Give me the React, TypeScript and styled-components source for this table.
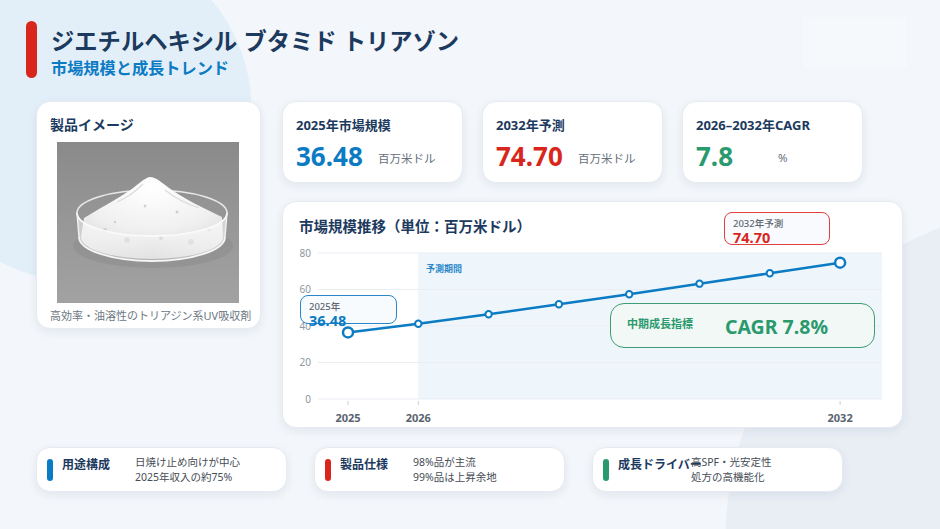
import React from "react";
import styled, { createGlobalStyle } from "styled-components";

const GlobalStyle = createGlobalStyle`
  * { box-sizing: border-box; }
  body {
    margin: 0;
    font-family: "Noto Sans", "Noto Sans CJK JP", sans-serif;
  }
`;

const NAVY = "#1c3a5e";
const BLUE = "#0b7bc4";
const RED = "#d9261c";
const GREEN = "#2a9a6e";

const Root = styled.div`
  width: 940px;
  height: 529px;
  overflow: hidden;
  padding-top: 21px;
  background:
    radial-gradient(circle at 80px 110px, #e3eff8 171px, rgba(227, 239, 248, 0) 172px),
    radial-gradient(circle at 1060px 540px, #e9eef5 334px, rgba(233, 238, 245, 0) 335px),
    #f3f6fa;
`;

const Header = styled.header`
  display: flex;
  align-items: flex-start;
  gap: 14px;
  margin-left: 26px;
  height: 57px;
`;

const AccentBar = styled.div`
  width: 11px;
  height: 57px;
  border-radius: 6px;
  background: ${RED};
`;

const TitleBlock = styled.div`
  padding-top: 5px;
`;

const Title = styled.h1`
  margin: 0;
  font-size: 23.3px;
  line-height: 31px;
  font-weight: 700;
  color: ${NAVY};
`;

const Subtitle = styled.div`
  font-size: 16.2px;
  line-height: 22px;
  font-weight: 700;
  color: ${BLUE};
`;

const LogoMark = styled.div`
  margin-left: auto;
  margin-right: 33px;
  margin-top: -4px;
  width: 104px;
  height: 50px;
  background: rgba(255, 255, 255, 0.3);
`;

const Content = styled.main`
  display: flex;
  align-items: flex-start;
  gap: 21px;
  margin: 23px 0 0 36px;
`;

const Card = styled.div`
  background: #fff;
  border: 1px solid #e6ebf2;
  border-radius: 14px;
  box-shadow: 0 3px 10px rgba(30, 60, 100, 0.08);
`;

const ProductCard = styled(Card)`
  width: 225px;
  height: 228px;
  padding: 12px 0 0 13px;
  display: flex;
  flex-direction: column;
`;

const CardTitle = styled.div`
  font-size: 14px;
  line-height: 22px;
  font-weight: 700;
  color: ${NAVY};
`;

const ImageFrame = styled.div`
  width: 182px;
  height: 161px;
  margin: 6px 0 0 7px;
`;

const Caption = styled.div`
  margin-top: 5px;
  font-size: 11px;
  line-height: 16px;
  color: #6c7783;
  white-space: nowrap;
`;

const RightColumn = styled.div`
  width: 621px;
  display: flex;
  flex-direction: column;
  gap: 18px;
`;

const KpiRow = styled.div`
  display: flex;
  gap: 19px;
`;

const KpiCard = styled(Card)`
  width: 181px;
  height: 82px;
  padding: 13px 0 0 13px;
`;

const KpiLabel = styled.div`
  font-size: 13px;
  line-height: 20px;
  font-weight: 700;
  color: ${NAVY};
`;

const KpiValueRow = styled.div`
  display: flex;
  align-items: center;
  gap: 12px;
  margin-top: 5px;
`;

const KpiValue = styled.div<{ $color: string }>`
  width: 70px;
  font-size: 26px;
  line-height: 32px;
  font-weight: 700;
  color: ${(p) => p.$color};
`;

const KpiUnit = styled.div`
  font-size: 11.5px;
  color: #66707c;
  padding-top: 3px;
`;

const ChartCard = styled(Card)`
  position: relative;
  width: 621px;
  height: 227px;
  padding-top: 12px;
`;

const ChartTitle = styled.div`
  margin-left: 16px;
  font-size: 14.5px;
  line-height: 24px;
  font-weight: 700;
  color: ${NAVY};
`;

const Callout = styled.div<{ $border: string; $bg: string }>`
  position: absolute;
  border: 1.5px solid ${(p) => p.$border};
  background: ${(p) => p.$bg};
  border-radius: 8px;
`;

const PointCallout = styled(Callout)<{ $left: number; $top: number; $w: number; $h: number }>`
  left: ${(p) => p.$left}px;
  top: ${(p) => p.$top}px;
  width: ${(p) => p.$w}px;
  height: ${(p) => p.$h}px;
  padding: 4px 0 0 8px;
`;

const CalloutLabel = styled.div`
  font-size: 9.5px;
  line-height: 13px;
  color: #5d6670;
  font-weight: 500;
`;

const CalloutValue = styled.div<{ $color: string }>`
  font-size: 14.5px;
  line-height: 15px;
  font-weight: 700;
  color: ${(p) => p.$color};
`;

const CagrBox = styled(Callout)`
  left: 327px;
  top: 101px;
  width: 265px;
  height: 45px;
  border-radius: 14px;
  display: flex;
  align-items: center;
  gap: 32px;
  padding-left: 16px;
`;

const CagrLabel = styled.div`
  font-size: 11px;
  font-weight: 700;
  color: ${GREEN};
  margin-top: -5px;
`;

const CagrValue = styled.div`
  font-size: 19.5px;
  font-weight: 700;
  color: ${GREEN};
  margin-top: 2px;
`;

const BottomRow = styled.div`
  display: flex;
  gap: 27px;
  margin: 19px 0 0 36px;
`;

const InfoCard = styled(Card)`
  width: 251px;
  height: 45px;
  display: flex;
  align-items: center;
  padding: 0 10px;
`;

const InfoBar = styled.div<{ $color: string }>`
  width: 6px;
  height: 22px;
  border-radius: 3px;
  background: ${(p) => p.$color};
  flex-shrink: 0;
`;

const InfoLabel = styled.div`
  width: 73px;
  margin-left: 9px;
  align-self: flex-start;
  margin-top: 8px;
  font-size: 12px;
  line-height: 17px;
  font-weight: 700;
  color: ${NAVY};
  white-space: nowrap;
`;

const InfoText = styled.div`
  position: relative;
  font-size: 10.5px;
  line-height: 14.5px;
  color: #454c55;
  white-space: nowrap;
`;

const ProductImage = () => (
  <svg width="182" height="161" viewBox="0 0 182 161">
    <defs>
      <linearGradient id="bgGrad" x1="0" y1="0" x2="0" y2="1">
        <stop offset="0" stopColor="#8a8a8a" />
        <stop offset="0.5" stopColor="#979797" />
        <stop offset="1" stopColor="#a2a2a2" />
      </linearGradient>
      <radialGradient id="powderGrad" cx="0.5" cy="0.15" r="0.9">
        <stop offset="0" stopColor="#ffffff" />
        <stop offset="0.55" stopColor="#f0f0f0" />
        <stop offset="1" stopColor="#d4d4d4" />
      </radialGradient>
      <linearGradient id="glassGrad" x1="0" y1="0" x2="1" y2="0">
        <stop offset="0" stopColor="#ffffff" stopOpacity="0.55" />
        <stop offset="0.5" stopColor="#ffffff" stopOpacity="0.25" />
        <stop offset="1" stopColor="#ffffff" stopOpacity="0.6" />
      </linearGradient>
    </defs>
    <rect width="182" height="161" fill="url(#bgGrad)" />
    <ellipse cx="96" cy="104" rx="80" ry="22" fill="#777" opacity="0.22" />
    <path d="M20 71 A75 23 0 0 1 170 71" fill="none" stroke="#e8e8e8" strokeWidth="1.6" />
    <path
      d="M27 76 C40 68 58 58 72 49 C82 42 87 36 93 35 C99 35 104 40 112 46 C126 56 146 66 165 75 L166 95 A71 22 0 0 1 24 95 Z"
      fill="url(#powderGrad)"
    />
    <path d="M60 60 C70 56 78 50 86 42 M108 48 C118 56 130 62 142 66" stroke="#dcdcdc" strokeWidth="1.2" fill="none" />
    <g fill="#c4c4c4" opacity="0.75">
      <circle cx="48" cy="88" r="2" />
      <circle cx="70" cy="98" r="2.6" />
      <circle cx="104" cy="96" r="2" />
      <circle cx="134" cy="100" r="3" />
      <circle cx="152" cy="88" r="1.6" />
      <circle cx="88" cy="64" r="1.4" />
      <circle cx="120" cy="70" r="1.5" />
      <circle cx="58" cy="80" r="1.2" />
    </g>
    <path
      d="M20 71 L22 95 A73 24 0 0 0 168 95 L170 71 A75 23 0 0 1 20 71 Z"
      fill="url(#glassGrad)"
    />
    <path d="M20 71 A75 23 0 0 0 170 71" fill="none" stroke="#fafafa" strokeWidth="1.8" />
    <path d="M22 95 A73 24 0 0 0 168 95" fill="none" stroke="#f5f5f5" strokeWidth="1.8" />
    <path d="M20 71 L22 95 M170 71 L168 95" stroke="#f2f2f2" strokeWidth="1.4" />
  </svg>
);

const values = [36.48, 41.2, 46.4, 51.9, 57.4, 63.2, 68.9, 74.7];
const px = (i: number) => 65 + i * 70.3;
const py = (v: number) => 161 - v * 1.825;

const TrendChart = () => {
  const pts = values.map((v, i) => `${px(i)},${py(v)}`).join(" ");
  return (
    <svg width="621" height="190" viewBox="0 0 621 190" style={{ display: "block" }}>
      <rect x="135" y="15" width="464" height="146" fill="#eef6fc" />
      {[0, 20, 40, 60, 80].map((v) => (
        <g key={v}>
          <line x1="35" x2="599" y1={py(v)} y2={py(v)} stroke="#e9eef3" strokeWidth="1" />
          <text
            x="28"
            y={py(v) + 3.5}
            textAnchor="end"
            fontSize="10"
            fill="#8c97a3"
            fontFamily='"Noto Sans", sans-serif'
          >
            {v}
          </text>
        </g>
      ))}
      <text
        x="143"
        y="34"
        fontSize="9"
        fontWeight="700"
        fill="#2a86c8"
        fontFamily='"Noto Sans CJK JP", sans-serif'
      >
        予測期間
      </text>
      {[0, 1, 7].map((i) => (
        <line key={i} x1={px(i)} x2={px(i)} y1="163" y2="167" stroke="#c9d2dc" strokeWidth="1" />
      ))}
      {[
        [0, "2025"],
        [1, "2026"],
        [7, "2032"],
      ].map(([i, label]) => (
        <text
          key={label}
          x={px(i as number)}
          y="184"
          textAnchor="middle"
          fontSize="11"
          fontWeight="700"
          fill="#5a6470"
          fontFamily='"Noto Sans", sans-serif'
        >
          {label}
        </text>
      ))}
      <polyline points={pts} fill="none" stroke={BLUE} strokeWidth="2.5" strokeLinejoin="round" />
      {values.map((v, i) => {
        const big = i === 0 || i === values.length - 1;
        return (
          <circle
            key={i}
            cx={px(i)}
            cy={py(v)}
            r={big ? 5 : 3.2}
            fill="#fff"
            stroke={BLUE}
            strokeWidth={big ? 2.5 : 2}
          />
        );
      })}
    </svg>
  );
};

const kpis = [
  { label: "2025年市場規模", value: "36.48", unit: "百万米ドル", color: BLUE },
  { label: "2032年予測", value: "74.70", unit: "百万米ドル", color: RED },
  { label: "2026–2032年CAGR", value: "7.8", unit: "%", color: GREEN },
];

const infos = [
  { label: "用途構成", lines: ["日焼け止め向けが中心", "2025年収入の約75%"], color: BLUE },
  { label: "製品仕様", lines: ["98%品が主流", "99%品は上昇余地"], color: RED },
  { label: "成長ドライバー", lines: ["高SPF・光安定性", "処方の高機能化"], color: GREEN },
];

const App = () => (
  <Root>
    <GlobalStyle />
    <Header>
      <AccentBar />
      <TitleBlock>
        <Title>ジエチルヘキシル ブタミド トリアゾン</Title>
        <Subtitle>市場規模と成長トレンド</Subtitle>
      </TitleBlock>
      <LogoMark />
    </Header>

    <Content>
      <ProductCard>
        <CardTitle>製品イメージ</CardTitle>
        <ImageFrame>
          <ProductImage />
        </ImageFrame>
        <Caption>高効率・油溶性のトリアジン系UV吸収剤</Caption>
      </ProductCard>

      <RightColumn>
        <KpiRow>
          {kpis.map((k) => (
            <KpiCard key={k.label}>
              <KpiLabel>{k.label}</KpiLabel>
              <KpiValueRow>
                <KpiValue $color={k.color}>{k.value}</KpiValue>
                <KpiUnit>{k.unit}</KpiUnit>
              </KpiValueRow>
            </KpiCard>
          ))}
        </KpiRow>

        <ChartCard>
          <ChartTitle>市場規模推移（単位：百万米ドル）</ChartTitle>
          <TrendChart />
          <PointCallout $border="#2a86c8" $bg="rgba(247, 251, 254, 0.9)" $left={17} $top={93} $w={97} $h={29}>
            <CalloutLabel>2025年</CalloutLabel>
            <CalloutValue $color={BLUE}>36.48</CalloutValue>
          </PointCallout>
          <PointCallout $border="#e0413a" $bg="#f8fafd" $left={441} $top={10} $w={106} $h={33}>
            <CalloutLabel>2032年予測</CalloutLabel>
            <CalloutValue $color={RED}>74.70</CalloutValue>
          </PointCallout>
          <CagrBox $border="#3f9d76" $bg="#f1f8f5">
            <CagrLabel>中期成長指標</CagrLabel>
            <CagrValue>CAGR 7.8%</CagrValue>
          </CagrBox>
        </ChartCard>
      </RightColumn>
    </Content>

    <BottomRow>
      {infos.map((it) => (
        <InfoCard key={it.label}>
          <InfoBar $color={it.color} />
          <InfoLabel>{it.label}</InfoLabel>
          <InfoText>
            {it.lines.map((l) => (
              <div key={l}>{l}</div>
            ))}
          </InfoText>
        </InfoCard>
      ))}
    </BottomRow>
  </Root>
);

export default App;
